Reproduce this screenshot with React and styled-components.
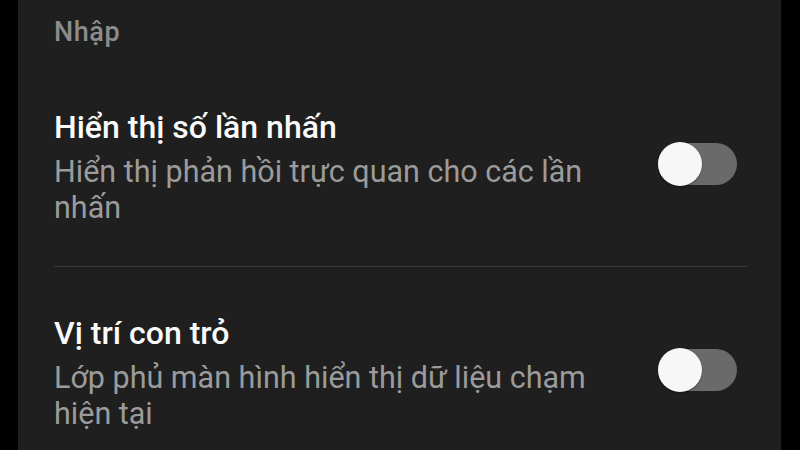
import styled, { createGlobalStyle } from "styled-components";

const GlobalStyle = createGlobalStyle`
  html, body {
    margin: 0;
    padding: 0;
    background: #000;
  }
  body {
    font-family: Roboto, "Noto Sans", "Liberation Sans", sans-serif;
  }
`;

const Screen = styled.div`
  width: 800px;
  height: 450px;
  overflow: hidden;
  background: #000;
  display: flex;
`;

const Panel = styled.div`
  margin-left: 18px;
  width: 763px;
  height: 100%;
  background: #1f1f1f;
  padding: 18px 34px 0 36px;
  box-sizing: border-box;
`;

const SectionTitle = styled.div`
  font-size: 27px;
  line-height: 28px;
  font-weight: 500;
  letter-spacing: 0.6px;
  color: #8c8c8c;
  margin-bottom: 61px;
`;

const Row = styled.div`
  display: flex;
  align-items: center;
  padding-bottom: ${(p) => (p.last ? 0 : "40px")};
  margin-bottom: ${(p) => (p.last ? 0 : "46px")};
  border-bottom: ${(p) => (p.last ? "none" : "1px solid #3a3a3a")};
`;

const TextCol = styled.div`
  flex: 1;
  min-width: 0;
`;

const Title = styled.div`
  font-size: 32px;
  line-height: 40px;
  font-weight: 500;
  color: #fafafa;
  margin-bottom: 7px;
`;

const Summary = styled.div`
  font-size: 30.5px;
  line-height: 36px;
  color: #9b9b9b;
`;

const Track = styled.div`
  position: relative;
  flex: none;
  width: 79px;
  height: 42px;
  border-radius: 21px;
  background: #6a6a6a;
  margin-left: 48px;
  margin-right: 10px;
  margin-top: -6px;
`;

const Thumb = styled.div`
  position: absolute;
  left: 0;
  top: -1px;
  width: 44px;
  height: 44px;
  border-radius: 50%;
  background: #f7f7f7;
  box-shadow: 0 1px 2px rgba(0, 0, 0, 0.4);
`;

const Switch = () => (
  <Track>
    <Thumb />
  </Track>
);

const settings = [
  {
    title: "Hiển thị số lần nhấn",
    summary: "Hiển thị phản hồi trực quan cho các lần nhấn",
  },
  {
    title: "Vị trí con trỏ",
    summary: "Lớp phủ màn hình hiển thị dữ liệu chạm hiện tại",
  },
];

export default function App() {
  return (
    <Screen>
      <GlobalStyle />
      <Panel>
        <SectionTitle>Nhập</SectionTitle>
        {settings.map((s, i) => (
          <Row key={s.title} last={i === settings.length - 1}>
            <TextCol>
              <Title>{s.title}</Title>
              <Summary>{s.summary}</Summary>
            </TextCol>
            <Switch />
          </Row>
        ))}
      </Panel>
    </Screen>
  );
}
